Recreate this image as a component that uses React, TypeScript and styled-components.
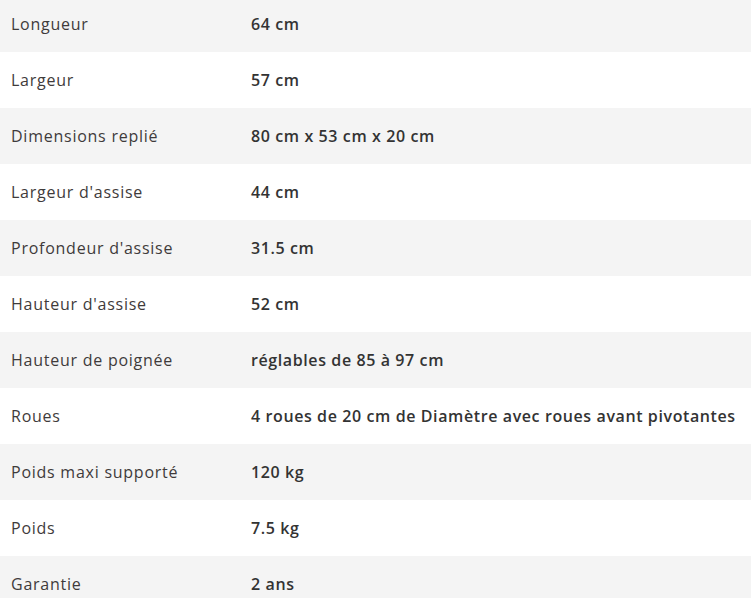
import styled, { createGlobalStyle } from 'styled-components'

const specs: [string, string][] = [
  ['Longueur', '64 cm'],
  ['Largeur', '57 cm'],
  ['Dimensions replié', '80 cm x 53 cm x 20 cm'],
  ["Largeur d'assise", '44 cm'],
  ["Profondeur d'assise", '31.5 cm'],
  ["Hauteur d'assise", '52 cm'],
  ['Hauteur de poignée', 'réglables de 85 à 97 cm'],
  ['Roues', '4 roues de 20 cm de Diamètre avec roues avant pivotantes'],
  ['Poids maxi supporté', '120 kg'],
  ['Poids', '7.5 kg'],
  ['Garantie', '2 ans'],
]

const GlobalStyle = createGlobalStyle`
  html, body {
    margin: 0;
    padding: 0;
    background: #fff;
    overflow: hidden;
  }
  body {
    font-family: 'Open Sans', 'Liberation Sans', sans-serif;
  }
`

const Table = styled.dl`
  margin: -4px 0 0;
  width: 751px;
`

const Row = styled.div<{ $shaded: boolean }>`
  display: grid;
  grid-template-columns: 240px 1fr;
  align-items: center;
  height: 56px;
  padding-left: 11px;
  background: ${(p) => (p.$shaded ? '#f4f4f4' : '#fff')};
`

const Label = styled.dt`
  margin: 0;
  font-size: 16px;
  color: #3f3b3b;
  letter-spacing: 0.75px;
`

const Value = styled.dd`
  margin: 0;
  font-size: 16px;
  font-weight: 600;
  color: #333;
  letter-spacing: 0.6px;
  white-space: nowrap;
`

const App = () => {
  return (
    <>
      <GlobalStyle />
      <Table>
        {specs.map(([label, value], index) => (
          <Row key={label} $shaded={index % 2 === 0}>
            <Label>{label}</Label>
            <Value>{value}</Value>
          </Row>
        ))}
      </Table>
    </>
  )
}

export default App
